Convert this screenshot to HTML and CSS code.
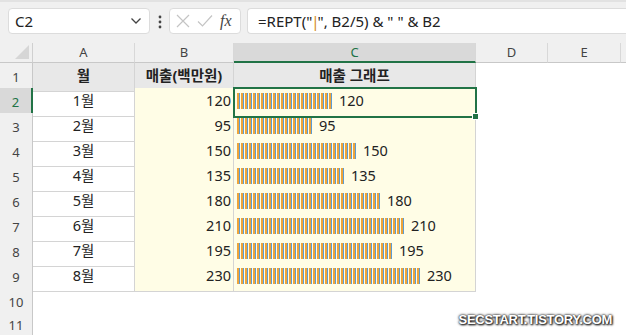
FILE: index.html
```html
<!DOCTYPE html>
<html lang="ko">
<head>
  <meta charset="UTF-8">
  <title>매출 그래프</title>
  <link rel="stylesheet" href="styles.css">
</head>
<body>
  <div class="toolbar">
    <div class="namebox">
      <span>C2</span>
      <svg class="chev" width="12" height="8" viewBox="0 0 12 8"><path d="M1.5 1.5 L6 6 L10.5 1.5" fill="none" stroke="#444" stroke-width="1.3"/></svg>
    </div>
    <svg class="dots" width="4" height="14" viewBox="0 0 4 14"><circle cx="2" cy="2" r="1.4" fill="#444"/><circle cx="2" cy="7" r="1.4" fill="#444"/><circle cx="2" cy="12" r="1.4" fill="#444"/></svg>
    <div class="fnbox">
      <svg width="14" height="14" viewBox="0 0 14 14"><path d="M1 1 L13 13 M13 1 L1 13" stroke="#c4c4c4" stroke-width="1.2"/></svg>
      <svg width="16" height="14" viewBox="0 0 16 14"><path d="M1 7.5 L5.5 12 L15 1.5" fill="none" stroke="#c4c4c4" stroke-width="1.2"/></svg>
      <span class="fx">fx</span>
    </div>
    <div class="formula">=REPT("<span class="caret">|</span>", B2/5) &amp; " " &amp; B2</div>
  </div>

  <div class="sheet">
    <div class="row colheads">
      <div class="corner"><svg width="14" height="14" viewBox="0 0 14 14"><path d="M14 0 L14 14 L0 14 Z" fill="#d6d6d6"/></svg></div>
      <div class="colhead">A</div>
      <div class="colhead">B</div>
      <div class="colhead sel">C</div>
      <div class="colhead">D</div>
      <div class="colhead">E</div>
      <div class="colhead last"></div>
    </div>

    <div class="row">
      <div class="rowhead">1</div>
      <div class="cell th">월</div>
      <div class="cell th">매출(백만원)</div>
      <div class="cell th">매출 그래프</div>
    </div>
    <div class="row">
      <div class="rowhead sel">2</div>
      <div class="cell month">1월</div>
      <div class="cell num">120</div>
      <div class="cell graph active"><span class="bar" style="width:96px"></span>120</div>
    </div>
    <div class="row">
      <div class="rowhead">3</div>
      <div class="cell month">2월</div>
      <div class="cell num">95</div>
      <div class="cell graph"><span class="bar" style="width:76px"></span>95</div>
    </div>
    <div class="row">
      <div class="rowhead">4</div>
      <div class="cell month">3월</div>
      <div class="cell num">150</div>
      <div class="cell graph"><span class="bar" style="width:120px"></span>150</div>
    </div>
    <div class="row">
      <div class="rowhead">5</div>
      <div class="cell month">4월</div>
      <div class="cell num">135</div>
      <div class="cell graph"><span class="bar" style="width:108px"></span>135</div>
    </div>
    <div class="row">
      <div class="rowhead">6</div>
      <div class="cell month">5월</div>
      <div class="cell num">180</div>
      <div class="cell graph"><span class="bar" style="width:144px"></span>180</div>
    </div>
    <div class="row">
      <div class="rowhead">7</div>
      <div class="cell month">6월</div>
      <div class="cell num">210</div>
      <div class="cell graph"><span class="bar" style="width:168px"></span>210</div>
    </div>
    <div class="row">
      <div class="rowhead">8</div>
      <div class="cell month">7월</div>
      <div class="cell num">195</div>
      <div class="cell graph"><span class="bar" style="width:156px"></span>195</div>
    </div>
    <div class="row">
      <div class="rowhead">9</div>
      <div class="cell month">8월</div>
      <div class="cell num">230</div>
      <div class="cell graph"><span class="bar" style="width:184px"></span>230</div>
    </div>
    <div class="row short">
      <div class="rowhead">10</div>
    </div>
    <div class="row short">
      <div class="rowhead">11</div>
    </div>
  </div>

  <div class="watermark">SECSTART.TISTORY.COM</div>
</body>
</html>
```

FILE: styles.css
```css
html, body {
  margin: 0;
  padding: 0;
  height: 100%;
  overflow: hidden;
  background: #ffffff;
  font-family: 'Noto Sans', 'Noto Sans CJK KR', sans-serif;
  color: #222;
}

body {
  position: relative;
}

/* formula bar */
.toolbar {
  height: 43px;
  box-sizing: border-box;
  background: #f0f0f0;
  border-top: 2px solid #e2e2e2;
  display: flex;
  align-items: flex-start;
  padding: 6px 0 0 8px;
}

.namebox {
  width: 142px;
  height: 26px;
  box-sizing: border-box;
  background: white;
  border: 1px solid #dcdcdc;
  border-radius: 4px;
  display: flex;
  align-items: center;
  justify-content: space-between;
  padding: 0 7px 0 6px;
  font-size: 15px;
}

.dots {
  margin: 7px 7px 0 8px;
}

.fnbox {
  width: 72px;
  height: 26px;
  box-sizing: border-box;
  background: white;
  border: 1px solid #dcdcdc;
  border-radius: 4px;
  display: flex;
  align-items: center;
  gap: 7px;
  padding-left: 6px;
}

.fx {
  font-family: 'Liberation Serif', serif;
  font-style: italic;
  font-size: 16px;
  color: #444;
}

.formula {
  flex: 1;
  height: 26px;
  box-sizing: border-box;
  margin-left: 6px;
  background: white;
  border: 1px solid #dcdcdc;
  border-right: none;
  border-radius: 4px 0 0 4px;
  padding-left: 10px;
  font-size: 15px;
  line-height: 24px;
  white-space: nowrap;
}

.caret {
  color: #d48a1c;
  letter-spacing: -2px;
  margin-left: -1px;
}

/* grid */
.row {
  display: grid;
  grid-template-columns: 33px 102px 99px 242px 72px 73px 1fr;
  height: 25px;
}

.row.short {
  height: 23px;
}

.colheads {
  height: 20px;
  background: #f0f0f0;
}

.corner {
  border-right: 1px solid #d0d0d0;
  border-bottom: 1px solid #c8c8c8;
  display: flex;
  align-items: flex-end;
  justify-content: flex-end;
  padding: 0 3px 3px 0;
}

.colhead {
  border-right: 1px solid #d8d8d8;
  border-bottom: 1px solid #c8c8c8;
  text-align: center;
  font-size: 13px;
  line-height: 19px;
  color: #444;
}

.colhead.sel {
  background: #d9d9d9;
  color: #217346;
  border-bottom: 2px solid #217346;
  line-height: 18px;
}

.colhead.last {
  border-right: none;
}

.rowhead {
  background: #f0f0f0;
  border-right: 1px solid #c8c8c8;
  border-bottom: 1px solid #d8d8d8;
  text-align: center;
  font-size: 13px;
  line-height: 28px;
  color: #444;
}

.rowhead.sel {
  background: #d9d9d9;
  color: #217346;
  border-right: 2px solid #217346;
}

.cell {
  border-right: 1px solid #d4d4d4;
  border-bottom: 1px solid #d4d4d4;
  font-size: 14.5px;
  line-height: 25px;
  white-space: nowrap;
}

.cell.th {
  background: #e8e8e8;
  font-weight: bold;
  text-align: center;
}

.cell.month {
  text-align: center;
}

.cell.num {
  background: #fffde6;
  text-align: right;
  padding-right: 2px;
}

.cell.graph {
  background: #fffde6;
  padding-left: 3px;
  position: relative;
  line-height: 24px;
}

.bar {
  display: inline-block;
  height: 16px;
  margin-right: 6px;
  vertical-align: -3px;
  background: repeating-linear-gradient(90deg, #eea43a 0 2px, #5b9bd5 2px 3px, transparent 3px 4px);
}

.cell.active {
  z-index: 2;
  outline: 2px solid #217346;
  outline-offset: -1px;
}

.cell.active::after {
  content: "";
  position: absolute;
  right: -4px;
  bottom: -4px;
  width: 5px;
  height: 5px;
  background: #217346;
  border: 1px solid white;
}

.watermark {
  position: absolute;
  right: 14px;
  bottom: 8px;
  font-family: 'Liberation Sans', sans-serif;
  font-weight: bold;
  font-size: 13px;
  letter-spacing: -0.3px;
  color: white;
  text-shadow: 0 0 2px #222, 0 0 3px #333, 1px 1px 2px #000;
}
```
